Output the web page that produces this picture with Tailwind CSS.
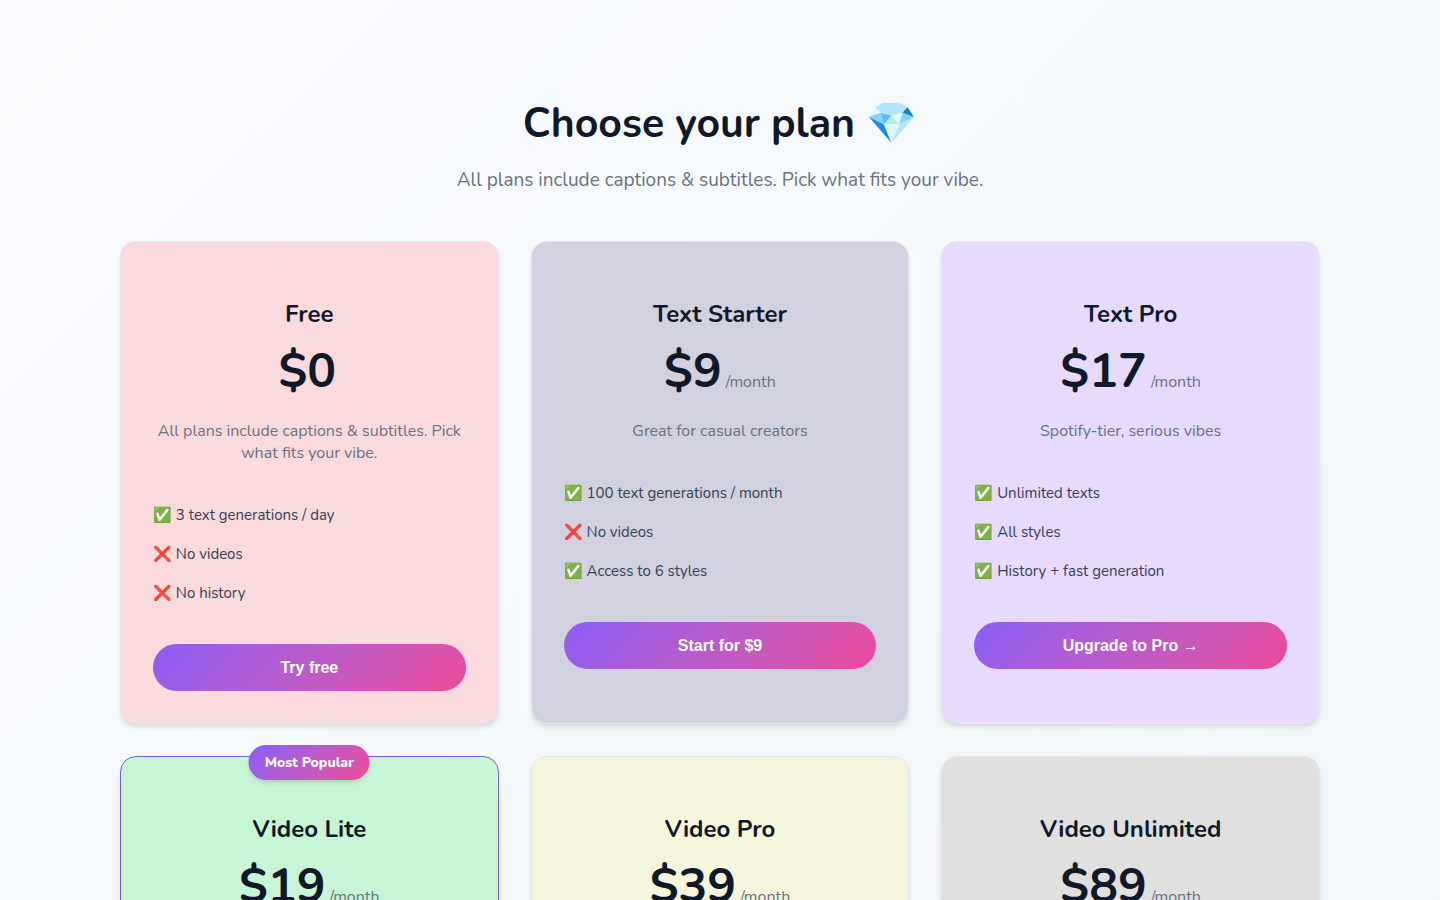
<!DOCTYPE html>
<html lang="en">
<head>
  <meta charset="UTF-8" />
  <meta name="viewport" content="width=device-width, initial-scale=1.0"/>
  <title>Choose your plan</title>
  <script src="https://cdn.jsdelivr.net/npm/@tailwindcss/browser@4"></script>
</head>
<body class="min-h-screen bg-linear-135 from-[#fafcfe] to-[#f1f6fa] font-[Nunito,Lato,sans-serif] text-[#111827]">

  <main class="max-w-[1248px] mx-auto px-6 pt-24 pb-24">
    <header class="text-center mb-12">
      <h1 class="text-[41px] leading-[56px] font-bold mb-4">Choose your plan 💎</h1>
      <p class="text-[19px] leading-[25px] text-gray-500">All plans include captions &amp; subtitles. Pick what fits your vibe.</p>
    </header>

    <div id="plans" class="grid grid-cols-1 md:grid-cols-3 gap-8"></div>
  </main>

  <script>
    const plans = [
      {
        name: "Free",
        price: "$0",
        bg: "bg-[#fadadd] border-gray-200",
        description: "All plans include captions & subtitles. Pick what fits your vibe.",
        features: ["✅ 3 text generations / day", "❌ No videos", "❌ No history"],
        button: "Try free"
      },
      {
        name: "Text Starter",
        price: "$9",
        period: "/month",
        bg: "bg-[#d1d1e0] border-gray-200",
        description: "Great for casual creators",
        features: ["✅ 100 text generations / month", "❌ No videos", "✅ Access to 6 styles"],
        button: "Start for $9"
      },
      {
        name: "Text Pro",
        price: "$17",
        period: "/month",
        bg: "bg-[#e8d9ff] border-gray-200",
        description: "Spotify-tier, serious vibes",
        features: ["✅ Unlimited texts", "✅ All styles", "✅ History + fast generation"],
        button: "Upgrade to Pro →"
      },
      {
        name: "Video Lite",
        price: "$19",
        period: "/month",
        bg: "bg-[#c6f6d5] border-[#7a5fd0]",
        badge: "Most Popular"
      },
      {
        name: "Video Pro",
        price: "$39",
        period: "/month",
        bg: "bg-[#f5f5dc] border-gray-200"
      },
      {
        name: "Video Unlimited",
        price: "$89",
        period: "/month",
        bg: "bg-[#e0e0e0] border-gray-200"
      }
    ];

    document.getElementById("plans").innerHTML = plans.map(plan => `
      <section class="relative rounded-2xl border p-8 shadow-md ${plan.bg}">
        ${plan.badge ? `<span class="absolute -top-3 left-1/2 -translate-x-1/2 rounded-full bg-linear-135 from-[#8b5cf6] to-[#ec4899] px-4 py-2 text-[14px] leading-[19px] font-extrabold text-white whitespace-nowrap shadow-md">${plan.badge}</span>` : ""}
        <div class="text-center pt-6">
          <h2 class="text-[24px] leading-[32px] font-bold mb-2">${plan.name}</h2>
          <div class="text-[48px] leading-[66px] font-bold mb-[5px]">${plan.price}<span class="text-[16px] font-normal text-gray-500">&nbsp;${plan.period || ""}</span></div>
          ${plan.description ? `<p class="text-[16px] leading-[22px] text-gray-500">${plan.description}</p>` : ""}
        </div>
        ${plan.features ? `
        <ul class="mt-8 text-[15px] leading-[23px] text-gray-700">
          ${plan.features.map(f => `<li class="py-2">${f}</li>`).join("")}
        </ul>` : ""}
        ${plan.button ? `<button class="mt-[31px] w-full h-[47px] rounded-full bg-linear-135 from-[#8b5cf6] to-[#ec4899] font-['Liberation_Sans',sans-serif] text-[16px] font-bold text-white cursor-pointer">${plan.button}</button>` : ""}
      </section>
    `).join("");
  </script>
</body>
</html>
